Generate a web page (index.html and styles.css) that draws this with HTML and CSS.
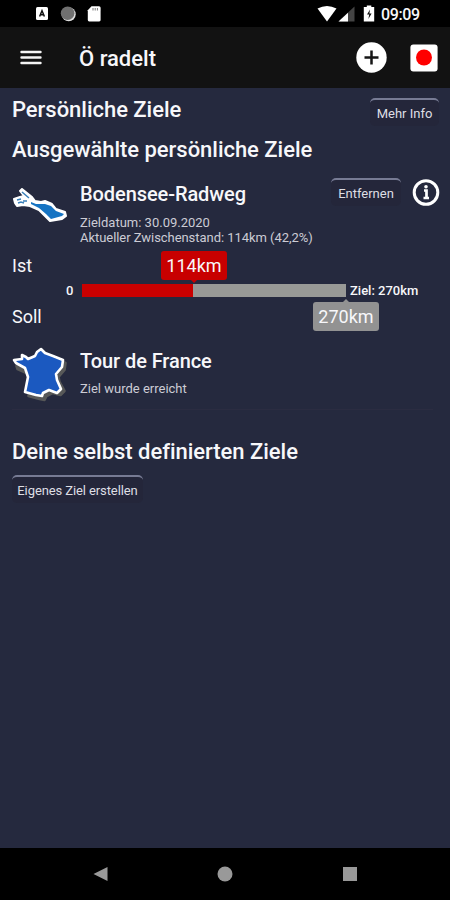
FILE: index.html
```html
<!DOCTYPE html>
<html lang="de">
<head>
<meta charset="utf-8">
<title>Ö radelt</title>
<link rel="stylesheet" href="styles.css">
</head>
<body>
<div class="status">
  <svg width="70" height="18" viewBox="0 0 70 18">
    <rect x="1" y="2" width="12" height="13" rx="1.5" fill="#fff"/>
    <path d="M4.6 11.5 7 5.8l2.4 5.7M5.5 9.8h3" fill="none" stroke="#111" stroke-width="1.5"/>
    <circle cx="33.700" cy="9.300" r="7" fill="#ddd"/><circle cx="32.600" cy="8.200" r="6.800" fill="#707070"/>
    <path d="M56.5 1.2H64q1.6 0 1.6 1.6V15q0 1.4-1.4 1.4H54.2q-1.4 0-1.4-1.4V5.200z" fill="#fff"/>
    <path d="M58 3v2.500m2.200-2.500v2.500m2.200-2.500v2.500" stroke="#777" stroke-width="1"/>
  </svg>
  <div class="status-right">
    <svg width="60" height="18" viewBox="0 0 60 18">
      <path d="M.5 3.500Q10 -1.500 19.500 3.500L10 16.500z" fill="#fff"/>
      <path d="M37.500 1.500v15H21.500z" fill="#444"/><path d="M31 7.700v8.800h-9.500z" fill="#fff"/>
      <path d="M46.800 2h3V.5h4.500V2h2.900v14.500H46.800V2z" fill="#fff"/>
      <path d="M53 4.500l-3 5h2.200l-.8 4.500 3.200-5.600h-2.200z" fill="#111"/>
    </svg>
    <span class="clock">09:09</span>
  </div>
</div>
<header class="bar">
  <svg width="22" height="16" viewBox="0 0 22 16"><path d="M1.500 2h19M1.500 7.500h19M1.500 13h19" stroke="#f4f4f4" stroke-width="2.400" stroke-linecap="round"/></svg>
  <h1>Ö radelt</h1>
  <svg width="32" height="32" viewBox="0 0 32 32"><circle cx="16.500" cy="15.500" r="15.200" fill="#fff"/><path d="M16.500 8.500v14M9.500 15.500h14" stroke="#151515" stroke-width="2.500"/></svg>
  <svg class="rec" width="28" height="28" viewBox="0 0 28 28"><rect x=".4" y=".4" width="27.200" height="27.200" rx="3" fill="#fff"/><circle cx="14" cy="13.500" r="8" fill="#f00"/></svg>
</header>
<main>
  <div class="top"><h2>Persönliche Ziele</h2><button class="btn more">Mehr Info</button></div>
  <h2>Ausgewählte persönliche Ziele</h2>
  <section class="goal">
    <svg class="pic lake" width="56" height="40" viewBox="0 0 56 40">
      <path d="M2 11L8 9 12 8 8 3 10 1 20 9 23 13 29 14 33 13 40 16 44 21 53 24 54 28 50 31 38 33 33 28 27 22 18 18 11 17 5 18 3 15z" fill="#fff" stroke="#fff" stroke-width="2" stroke-linejoin="round"/>
      <path d="M19 14l5 2 9 0 6 2 5 5 8 3-2 2-11 3-5-5-7-6-8-4z" fill="#1674c3"/>
      <path d="M10 4l7 6M5 12l4-1M11 13h4M6 15l3-1 3 1" fill="none" stroke="#397fb9" stroke-width="1.500"/>
    </svg>
    <div class="info"><h3>Bodensee-Radweg</h3><p>Zieldatum: 30.09.2020</p><p class="state">Aktueller Zwischenstand: 114km (42,2%)</p></div>
    <button class="btn remove">Entfernen</button>
    <svg class="details" width="28" height="28" viewBox="0 0 28 28"><circle cx="14" cy="13.500" r="11.800" fill="none" stroke="#fff" stroke-width="3"/><path d="M12 11.500h2.500v7.500m-3 0h5.500" fill="none" stroke="#fff" stroke-width="2.700"/><circle cx="14" cy="7.800" r="1.800" fill="#fff"/></svg>
  </section>
  <section class="progress">
    <div class="line"><span class="label">Ist</span><span class="tag red">114km</span></div>
    <div class="track-row"><span class="zero">0</span><div class="track"><div class="fill" style="width:42.2%"></div></div><span class="ziel">Ziel: 270km</span></div>
    <div class="line"><span class="label">Soll</span><span class="tag gray">270km</span></div>
  </section>
  <section class="tour">
    <svg class="pic" width="56" height="56" viewBox="0 0 56 56">
      <path d="M29 3l5 4 8 3 9 4-1 7-6 7 1 5 5 9-4 4-8-2-6 3-2 4-5-1-11-3 2-15-4-8-9-4-1-3 7-1 0-4 4 1 2 3 7-3z" transform="translate(2.500 3)" fill="#575858" stroke="#575858" stroke-width="2.600" stroke-linejoin="round"/>
      <path d="M29 3l4 4 8 3 10 4-1 7-6 7 1 6 4 9-4 4-8-3-6 3-1 3-6-1-11-3 1-5 2-10-3-9-9-5-2-3 8-1 0-4 4 2 2 2 7-3 2-4z" fill="#1b59c0" stroke="#fff" stroke-width="2.600" stroke-linejoin="round"/>
    </svg>
    <div class="info"><h3>Tour de France</h3><p>Ziel wurde erreicht</p></div>
  </section>
  <h2 class="own">Deine selbst definierten Ziele</h2>
  <button class="btn create">Eigenes Ziel erstellen</button>
</main>
<nav>
  <svg width="16" height="16" viewBox="0 0 16 16"><path d="M1.500 8L15.500 1v14z" fill="#999"/></svg>
  <svg width="16" height="16" viewBox="0 0 16 16"><circle cx="8" cy="8" r="7.500" fill="#999"/></svg>
  <svg width="16" height="16" viewBox="0 0 16 16"><path d="M1 1h14v14H1z" fill="#999"/></svg>
</nav>
</body>
</html>
```
FILE: styles.css
```css
*{box-sizing:border-box}
body{margin:0;width:450px;height:900px;display:flex;flex-direction:column;background:#25293e;color:#f7f7fa;font-family:Roboto,sans-serif;overflow:hidden}
h1,h2,h3,p{margin:0;white-space:nowrap}
svg{display:block;flex:none}
.status{height:27px;background:#000;display:flex;justify-content:space-between;padding:5px 30px 0 35px}
.status-right{display:flex;gap:4px}
.clock{font-size:16px;line-height:19px;font-weight:500;width:39px;letter-spacing:-.4px}
.bar{height:61px;background:#121212;display:flex;align-items:center;padding:0 12px 0 20px}
h1{font-size:22px;line-height:30px;font-weight:500;margin-left:37px;flex:1;padding-top:2px}
.rec{margin-left:23px}
main{height:760px;padding:0 11px 0 12px}
h2{font-size:22px;line-height:28px;font-weight:500;letter-spacing:-.03px}
.top{display:flex;justify-content:space-between;height:48px;padding-top:8px}
.btn{appearance:none;background:#24263a;color:#dedee4;border:0;border-top:2px solid #777b94;border-radius:5px;font:13px/20px Roboto,sans-serif;padding:3px 0 2px;height:28px;white-space:nowrap;flex:none;text-align:center}
.more{width:69px;margin-top:2px}
.goal{height:75px;margin-top:13px;display:flex}
.pic{margin-right:12px}
.lake{margin-top:11px}
h3{font-size:20px;line-height:26px;font-weight:500;letter-spacing:-.08px}
p{font-size:13px;line-height:15px;color:#ccccd5}
.goal h3{margin:4px 0 8px}
.goal .info{width:239px;flex:none}
.state{letter-spacing:-.05px}
.remove{width:70px;margin:1px 0 0 12px}
.details{margin:2px 0 0 11px}
.progress{height:82px;margin-top:-1px}
.line{display:flex;height:30px;font-size:18px;line-height:30px}
.label{width:49px}
.tag{width:66px;height:29px;line-height:30px;text-align:center;border-radius:3px;position:relative}
.tag::after{content:"";position:absolute;left:29px;border:4px solid transparent}
.red{margin-left:100px;background:#c80000}
.red::after{top:28px;border-top-color:#c80000}
.gray{margin-left:252px;background:#929292}
.gray::after{top:-7px;border-bottom-color:#929292}
.track-row{height:21px;display:flex;align-items:center;font-size:13px;line-height:15px;font-weight:500;padding-bottom:2px}
.zero{width:8px;margin-left:54px}
.track{width:264px;height:13px;margin-left:8px;background:#989996}
.fill{height:100%;background:#c90000}
.ziel{margin-left:4px;white-space:nowrap}
.tour{height:64px;margin:13px 6px 0 0;display:flex;border-bottom:1px solid #2b2c41}
.tour h3{margin:2px 0 7px}
.own{margin-top:28px}
.create{display:block;width:131px;margin-top:9px;letter-spacing:-.1px}
nav{height:52px;background:#000;display:flex;justify-content:space-between;padding:18px 92px 0}
```
